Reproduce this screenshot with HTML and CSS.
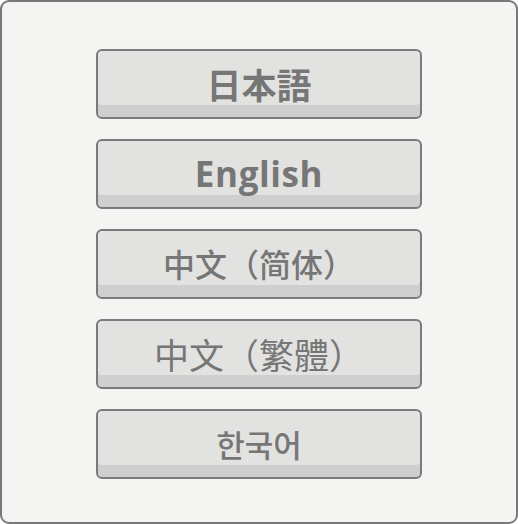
FILE: index.html
```html
<!DOCTYPE html>
<html lang="ja">
<head>
<meta charset="utf-8">
<link rel="stylesheet" href="styles.css">
</head>
<body>
<div class="frame">
  <div class="list">
    <button class="btn ja" lang="ja">日本語</button>
    <button class="btn en" lang="en">English</button>
    <button class="btn sc" lang="zh-CN">中文（简体）</button>
    <button class="btn tc" lang="zh-TW">中文（繁體）</button>
    <button class="btn ko" lang="ko">한국어</button>
  </div>
</div>
</body>
</html>
```
FILE: styles.css
```css
html, body {
  margin: 0;
  padding: 0;
  width: 518px;
  height: 524px;
  background: #ffffff;
}
.frame {
  box-sizing: border-box;
  width: 518px;
  height: 524px;
  border: 2px solid #787878;
  border-radius: 9px;
  background: #f4f5f3;
  padding-top: 47px;
  padding-left: 94px;
}
.list {
  display: flex;
  flex-direction: column;
  align-items: flex-start;
  gap: 20px;
}
.btn {
  box-sizing: border-box;
  width: 326px;
  height: 70px;
  border: 2px solid #7a7a7a;
  border-radius: 6px;
  background: #e2e3e1;
  box-shadow: inset 0 -12px 0 #cfcfcf;
  color: #767676;
  display: flex;
  align-items: center;
  justify-content: center;
  padding: 0;
  margin: 0;
  line-height: 1;
}
.ja {
  font-family: "Noto Sans CJK JP", sans-serif;
  font-weight: 700;
  font-size: 35px;
  padding-bottom: 2px;
}
.en {
  font-family: "Open Sans", "Noto Sans", sans-serif;
  font-weight: 700;
  font-size: 35px;
  letter-spacing: 0.6px;
  padding-bottom: 2px;
}
.sc {
  font-family: "Noto Sans CJK SC", sans-serif;
  font-weight: 500;
  font-size: 32px;
  padding-bottom: 2px;
}
.tc {
  font-family: "Noto Sans CJK TC", sans-serif;
  font-weight: 400;
  font-size: 35px;
  padding-bottom: 2px;
}
.ko {
  font-family: "Noto Sans CJK KR", sans-serif;
  font-weight: 500;
  font-size: 31px;
  padding-bottom: 2px;
}
```
